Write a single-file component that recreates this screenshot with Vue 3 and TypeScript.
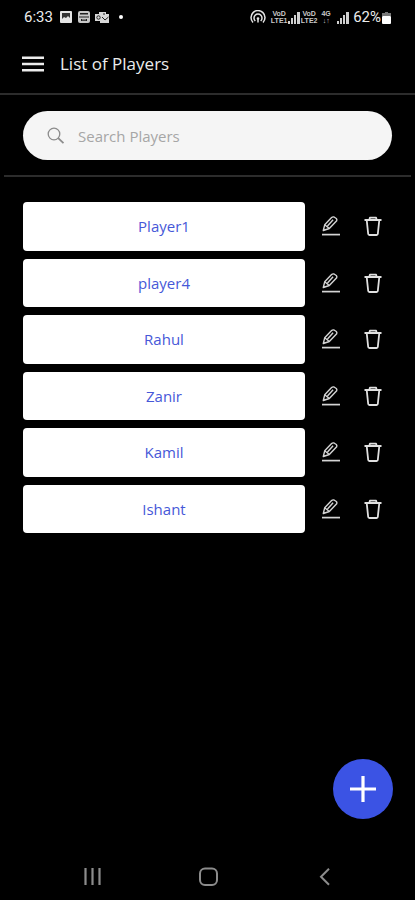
<script setup lang="ts">
import { computed, ref } from 'vue'

interface Player {
  id: number
  name: string
}

const players = ref<Player[]>(
  ['Player1', 'player4', 'Rahul', 'Zanir', 'Kamil', 'Ishant'].map((name, i) => ({ id: i + 1, name })),
)
const query = ref('')

const visiblePlayers = computed(() => {
  const q = query.value.trim().toLowerCase()
  return players.value.filter((p) => p.name.toLowerCase().includes(q))
})

function removePlayer(id: number) {
  players.value = players.value.filter((p) => p.id !== id)
}
</script>

<template>
  <div class="screen">
    <div class="status">
      <div class="status-side">
        <span class="clock">6:33</span>
        <svg class="note" viewBox="0 0 14 14">
          <rect x="1" y="1" width="12" height="12" rx="1" fill="#e4e4e4" />
          <path d="M3 3h8v5L9 6 7 8 5 7 3 9z" fill="#333" />
        </svg>
        <svg class="note" viewBox="0 0 14 14">
          <rect x="1" y="1" width="12" height="12" rx="2" fill="#c8c8c8" />
          <path d="M3 3h8v1.500H3zM2 6.500h10v1H2zM4 9h6v2H4z" fill="#222" />
          <path d="M5 9.800h4" stroke="#c8c8c8" stroke-width=".8" />
        </svg>
        <svg class="note" viewBox="0 0 14 14">
          <path d="M4 2h7v2h3v9H5v-2H0V4h4z" fill="#d8d8d8" />
          <circle cx="3.500" cy="7.500" r="1.700" fill="none" stroke="#222" />
          <path d="M7 7l3 3 3.500-3M8 4h2" fill="none" stroke="#222" />
        </svg>
        <span class="dot"></span>
      </div>
      <div class="status-side tight">
        <svg class="hotspot" viewBox="0 0 18 14" fill="none" stroke="#e4e4e4" stroke-width="1.500">
          <path d="M4 12.500A7 7 0 1 1 14 12.500" />
          <path d="M6.300 11A4 4 0 1 1 11.700 11" />
          <circle cx="9" cy="8.500" r="1.300" fill="#e4e4e4" stroke="none" />
          <path d="M9 9v3.500" />
        </svg>
        <span class="tiny"><span>VoD</span><span>LTE1</span></span>
        <svg class="signal" viewBox="0 0 12 13" fill="#cfcfcf">
          <path d="M0 10h2v3H0zM3 7h2v6H3zM6 4h2v9H6zM9 1h3v12H9z" />
        </svg>
        <span class="tiny"><span>VoD</span><span>LTE2</span></span>
        <span class="tiny net"><span>4G</span><span>↓↑</span></span>
        <svg class="signal" viewBox="0 0 12 13" fill="#cfcfcf">
          <path d="M0 10h2v3H0zM3 7h2v6H3zM6 4h2v9H6zM9 1h3v12H9z" />
        </svg>
        <span class="percent">62%</span>
        <svg class="battery" viewBox="0 0 9 13">
          <path d="M3 1h3v1h3v3H0V2h3z" fill="#777" />
          <rect y="5" width="9" height="8" rx="1" fill="#fff" />
        </svg>
      </div>
    </div>

    <header class="header">
      <button class="icon-btn" type="button" aria-label="Menu">
        <svg class="menu" viewBox="0 0 22 16" stroke="#ececec" stroke-width="2.500">
          <path d="M0 1.800h22M0 8h22M0 14.200h22" />
        </svg>
      </button>
      <h1>List of Players</h1>
    </header>

    <div class="search-wrap">
      <label class="search">
        <svg class="lens" viewBox="0 0 18 18" fill="none" stroke="#8c8c8c" stroke-width="1.300">
          <circle cx="7" cy="7" r="5.800" />
          <path d="M11.200 11.200l5.300 5" stroke-width="1.800" />
        </svg>
        <input v-model="query" type="text" placeholder="Search Players" aria-label="Search Players" />
      </label>
    </div>

    <main class="content">
      <ul class="list">
        <li v-for="p in visiblePlayers" :key="p.id" class="row">
          <button class="name" type="button">{{ p.name }}</button>
          <div class="actions">
            <button class="icon-btn" type="button" :aria-label="`Edit ${p.name}`">
              <svg class="action" viewBox="0 0 20 22" fill="none" stroke="#d4d4d4" stroke-width="1.400" stroke-linejoin="round">
                <path d="M2.300 15.500l1.400-5.700L10.600 2.600q1-1 2.400-.6l2.300 1.500q.9.900.4 2.300L8.300 13.500z" />
                <path d="M3.700 9.800l4.600 3.700M6.500 11l5.600-6.300" />
                <path d="M1 19.600h18" stroke-width="1.700" />
              </svg>
            </button>
            <button class="icon-btn" type="button" :aria-label="`Delete ${p.name}`" @click="removePlayer(p.id)">
              <svg class="action" viewBox="0 0 20 22" fill="none" stroke="#e0e0e0" stroke-width="1.800" stroke-linejoin="round">
                <path d="M1.500 5h17M6.300 5l.6-2.400h6.200l.6 2.400" />
                <path d="M3.700 5l1.500 14q.1 1 1.200 1h7.200q1.100 0 1.200-1L16.300 5" />
              </svg>
            </button>
          </div>
        </li>
      </ul>
      <button class="fab" type="button" aria-label="Add player">
        <svg class="plus" viewBox="0 0 26 26" stroke="#fff" stroke-width="3.200">
          <path d="M13 0v26M0 13h26" />
        </svg>
      </button>
    </main>

    <nav class="navbar" aria-label="System">
      <button class="icon-btn" type="button" aria-label="Recent apps">
        <svg class="sys" viewBox="0 0 20 20" stroke="#8c8c8c" stroke-width="2.200">
          <path d="M2.500 1v17M9.500 1v17M16.500 1v17" />
        </svg>
      </button>
      <button class="icon-btn" type="button" aria-label="Home">
        <svg class="sys" viewBox="0 0 20 20" fill="none" stroke="#8c8c8c" stroke-width="2">
          <rect x="1" y="1.500" width="17" height="16.500" rx="5" />
        </svg>
      </button>
      <button class="icon-btn" type="button" aria-label="Back">
        <svg class="sys" viewBox="0 0 20 20" fill="none" stroke="#8c8c8c" stroke-width="2">
          <path d="M14 1.800L6 9.800l8 8" />
        </svg>
      </button>
    </nav>
  </div>
</template>

<style>
body {
  margin: 0;
  background: #000;
}
</style>

<style scoped>
.screen {
  display: flex;
  flex-direction: column;
  min-height: 100vh;
  background: #000;
  color: #ececec;
  font-family: 'Open Sans', 'Noto Sans', sans-serif;
}
svg {
  display: block;
  flex: none;
}
button {
  padding: 0;
  border: 0;
  background: none;
  font: inherit;
  cursor: pointer;
}
.status {
  display: flex;
  justify-content: space-between;
  align-items: center;
  height: 34px;
  padding: 0 24px;
  font: 15px/20px Roboto, sans-serif;
}
.status-side {
  display: flex;
  align-items: center;
  gap: 4px;
}
.tight {
  gap: 1px;
}
.note {
  width: 14px;
  height: 14px;
}
.clock {
  margin-right: 2px;
}
.dot {
  width: 4px;
  height: 4px;
  margin-left: 6px;
  border-radius: 50%;
  background: #fff;
}
.hotspot {
  width: 18px;
  height: 14px;
  margin-right: 3px;
}
.tiny {
  display: flex;
  flex-direction: column;
  align-items: center;
  width: 16px;
  color: #c8c8c8;
  font: bold 7px/7px 'Liberation Sans', sans-serif;
}
.net {
  margin-right: 2px;
}
.signal {
  width: 12px;
  height: 13px;
}
.percent {
  margin-left: 3px;
}
.battery {
  width: 9px;
  height: 13px;
}
.header {
  display: flex;
  align-items: center;
  gap: 16px;
  height: 59px;
  padding: 0 22px;
  border-bottom: 2px solid #2c2c2c;
}
.menu {
  width: 22px;
  height: 16px;
}
h1 {
  margin: 0;
  font-size: 17px;
  line-height: 24px;
  font-weight: 500;
}
.search-wrap {
  margin: 0 4px;
  padding: 16px 19px 15px;
  border-bottom: 2px solid #2c2c2c;
}
.search {
  display: flex;
  align-items: center;
  gap: 13px;
  height: 49px;
  padding: 0 24px;
  border-radius: 25px;
  background: #f5f5f5;
}
.lens {
  width: 18px;
  height: 18px;
}
input {
  flex: 1;
  min-width: 0;
  padding: 0;
  border: 0;
  outline: 0;
  background: none;
  color: #333;
  font: 15px/20px 'Open Sans', 'Noto Sans', sans-serif;
}
input::placeholder {
  color: #a6a6a6;
  opacity: 1;
}
.content {
  position: relative;
  flex: 1;
  padding: 25px 23px;
}
.list {
  display: grid;
  grid-auto-rows: 1fr;
  gap: 8px;
  min-height: 331px;
  margin: 0;
  padding: 0;
  list-style: none;
}
.row {
  display: flex;
  gap: 16px;
}
.name {
  flex: 1;
  border-radius: 4px;
  background: #fff;
  color: #4658d8;
  font-size: 15px;
  line-height: 20px;
}
.actions {
  display: flex;
  align-items: center;
  gap: 22px;
  padding-right: 9px;
}
.action {
  width: 20px;
  height: 22px;
}
.fab {
  position: absolute;
  right: 22px;
  bottom: 34px;
  display: grid;
  place-items: center;
  width: 60px;
  height: 60px;
  border-radius: 50%;
  background: #3b53e4;
}
.plus {
  width: 26px;
  height: 26px;
}
.navbar {
  display: flex;
  justify-content: space-around;
  align-items: center;
  height: 47px;
  padding: 0 32px 0 35px;
}
.sys {
  width: 20px;
  height: 20px;
}
</style>
